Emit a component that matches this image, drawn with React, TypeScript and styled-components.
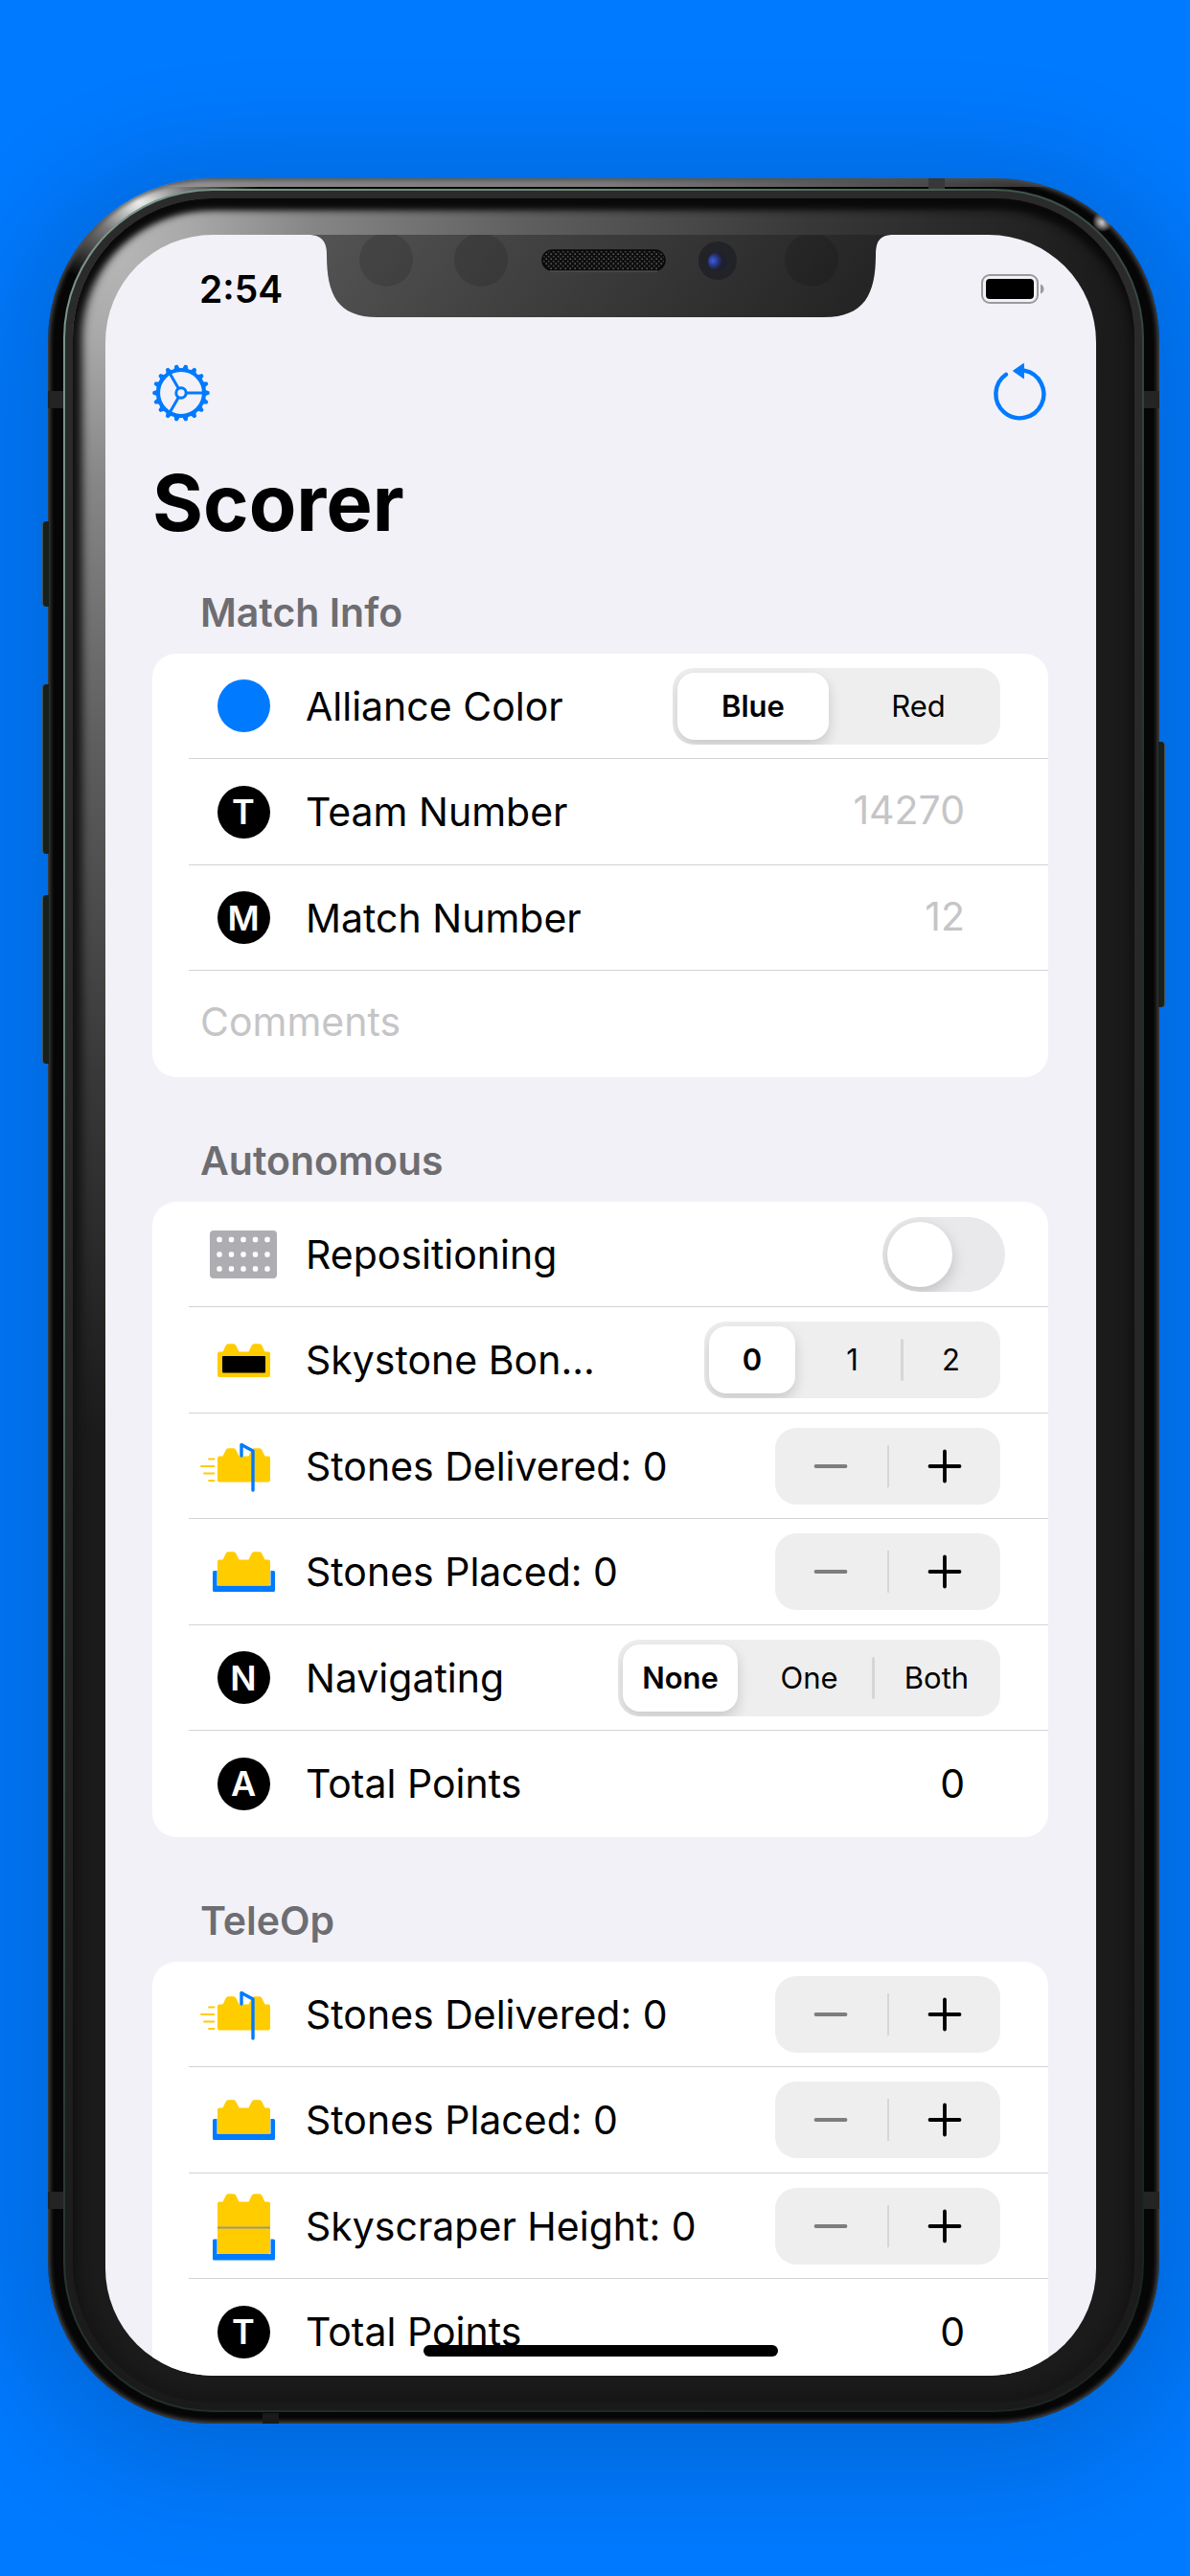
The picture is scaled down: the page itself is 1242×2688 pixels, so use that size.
import React, { useState } from 'react';
import styled, { createGlobalStyle, css } from 'styled-components';

const BLUE = '#007aff';
const YELLOW = '#ffcc00';

const GlobalStyle = createGlobalStyle`
  *, *::before, *::after { box-sizing: border-box; }
  body { margin: 0; background: ${BLUE}; }
  body, button, input { font-family: Inter, "Liberation Sans", sans-serif; }
`;

/* ---------- Device ---------- */

const Stage = styled.div`
  display: flex;
  height: 100vh;
  min-height: 1300px;
  padding: 186px 32px 159px 50px;
  overflow: hidden;
  background: ${BLUE};
`;

const Phone = styled.div`
  position: relative;
  display: flex;
  flex: 1;
  min-width: 0;
  padding: 11px 16px 12px;
  border-radius: 170px;
  background:
    radial-gradient(circle at calc(100% - 59px) 45px, #fff 0, rgba(255, 255, 255, 0) 11px),
    radial-gradient(ellipse 130px 90px at 94px 24px, #f4f4f4 0, rgba(150, 150, 150, 0.8) 40%, rgba(90, 90, 90, 0) 100%),
    linear-gradient(to right, #909090 0, #7c7c7c 50%, #484848 80%, #1c1c1c 100%) top / 100% 9px no-repeat,
    #060606;
  box-shadow:
    inset 0 0 5px 2px #505050,
    0 16px 110px 36px rgba(0, 0, 0, 0.15);
`;

const SideButton = styled.div<{ $side: 'left' | 'right'; $top: number; $height: number }>`
  position: absolute;
  top: ${(p) => p.$top}px;
  ${(p) => p.$side}: -6px;
  width: 7px;
  height: ${(p) => p.$height}px;
  border-radius: ${(p) => (p.$side === 'left' ? '4px 0 0 4px' : '0 4px 4px 0')};
  border-${(p) => p.$side}: 1px solid #4b524e;
  background: #16211c;
`;

const Antenna = styled.div<{ $edge: 'left' | 'right' | 'top' | 'bottom' }>`
  position: absolute;
  ${(p) =>
    p.$edge === 'left' || p.$edge === 'right'
      ? css`
          ${p.$edge}: 0;
          width: 16px;
          height: 18px;
          background: #242424;
        `
      : css`
          ${p.$edge}: 0;
          width: 17px;
          height: 11px;
          background: ${p.$edge === 'top' ? '#383838' : '#1a1a1a'};
        `}
`;

const UpperAntenna = styled(Antenna)`top: 222px;`;
const LowerAntenna = styled(Antenna)`bottom: 224px;`;
const TopAntenna = styled(Antenna)`right: 224px;`;
const BottomAntenna = styled(Antenna)`left: 224px;`;

const Trim = styled.div`
  position: relative;
  display: flex;
  flex: 1;
  min-width: 0;
  padding: 2px;
  border-radius: 156px;
  background: linear-gradient(125deg, #7d9a8c 0, #6a8578 20%, #3c5147 38%, #222e2a 60%, #1a2421 100%);
`;

const GlassEdge = styled.div`
  display: flex;
  flex: 1;
  min-width: 0;
  padding: 8px;
  border-radius: 154px;
  background: linear-gradient(to bottom, #2b2b2b 0, #262626 60%, #1a1a1a 100%);
`;

const Bezel = styled.div`
  display: flex;
  flex: 1;
  min-width: 0;
  padding: 38px 40px 28px 34px;
  border-radius: 146px;
  background: radial-gradient(
    ellipse 1040px 1240px at 40px 50px,
    #b8b8b8 0,
    #a8a8a8 8%,
    #868686 20%,
    #5e5e5e 42%,
    #383838 70%,
    #1b1b1b 100%
  );
  box-shadow:
    inset 0 12px 7px -1px #0a0a0a,
    inset 0 0 9px 10px #171717;
`;

const Screen = styled.main`
  position: relative;
  display: flex;
  flex: 1;
  flex-direction: column;
  min-width: 0;
  overflow: hidden;
  border-radius: 112px;
  background: #f2f1f7;
`;

const NotchDrawing = styled.svg`
  position: absolute;
  top: -1px;
  left: 50%;
  width: 606px;
  height: 88px;
  margin-left: -303px;
`;

const HomeIndicator = styled.div`
  position: absolute;
  bottom: 20px;
  left: 50%;
  width: 370px;
  height: 12px;
  margin-left: -185px;
  border-radius: 6px;
  background: #000;
`;

/* ---------- Header ---------- */

const StatusBar = styled.div`
  display: flex;
  flex: none;
  align-items: center;
  justify-content: space-between;
  height: 86px;
  padding: 28px 53px 0 98px;
`;

const Clock = styled.time`
  font-size: 39px;
  font-weight: 600;
  line-height: 48px;
  color: #000;
`;

const Toolbar = styled.header`
  display: flex;
  flex: none;
  align-items: center;
  justify-content: space-between;
  height: 108px;
  padding: 50px 50px 0 49px;
`;

const IconButton = styled.button`
  display: flex;
  padding: 0;
  border: 0;
  background: none;
  color: ${BLUE};

  svg { display: block; overflow: visible; }
`;

const Title = styled.h1`
  flex: none;
  margin: 36px 49px 39px;
  font-size: 81px;
  font-weight: 700;
  line-height: 100px;
  color: #000;
`;

/* ---------- Form ---------- */

const Form = styled.form`
  display: flex;
  flex: 1;
  flex-direction: column;
  gap: 62px;
  min-height: 0;
  padding: 0 50px 0 49px;
  overflow-y: auto;
  scrollbar-width: none;
`;

const Section = styled.section`
  display: flex;
  flex: none;
  flex-direction: column;
  gap: 17px;
`;

const SectionTitle = styled.h2`
  margin: 0 0 0 50px;
  font-size: 41px;
  font-weight: 600;
  line-height: 51px;
  color: #6d6d72;
`;

const Card = styled.div`
  border-radius: 25px;
  background: #fff;
`;

const Row = styled.div<{ $inset?: number }>`
  display: flex;
  align-items: center;
  gap: 8px;
  height: 110px;
  margin-left: 38px;
  padding-right: ${(p) => p.$inset ?? 50}px;
  border-bottom: 1px solid #d3d3d6;

  &:nth-child(even) { height: 111px; }
  &:last-child { border-bottom-color: transparent; }
`;

const IconCell = styled.span`
  display: flex;
  flex: none;
  justify-content: center;
  width: 114px;
`;

const labelText = css`
  flex: 1;
  min-width: 0;
  overflow: hidden;
  font-size: 41px;
  line-height: 52px;
  white-space: nowrap;
  text-overflow: ellipsis;
  color: #000;
`;

const Label = styled.span`${labelText}`;
const FieldLabel = styled.label`${labelText}`;

const Value = styled.output`
  padding-right: 37px;
  font-size: 41px;
  line-height: 52px;
  color: #000;
`;

const TextField = styled.input<{ $align?: 'left' | 'right' }>`
  flex: 1;
  min-width: 0;
  height: 52px;
  padding: ${(p) => (p.$align === 'right' ? '0 37px 4px 0' : '0 0 4px 12px')};
  border: 0;
  outline: 0;
  background: none;
  font-size: 41px;
  text-align: ${(p) => p.$align ?? 'left'};
  color: #000;

  &::placeholder { color: #c5c5c7; opacity: 1; }
`;

const NumberRow = styled(Row)`padding-right: 50px;`;

const Dot = styled.span<{ $color: string }>`
  display: flex;
  align-items: center;
  justify-content: center;
  width: 55px;
  height: 55px;
  border-radius: 50%;
  background: ${(p) => p.$color};
  font-size: 36px;
  font-weight: 600;
  line-height: 36px;
  color: #fff;
`;

const Glyph = styled.svg`
  display: block;
  width: 92px;
  height: 76px;
`;

/* ---------- Controls ---------- */

const SegmentGroup = styled.div<{ $segment: number; $count: number }>`
  display: grid;
  flex: none;
  grid-template-columns: repeat(${(p) => p.$count}, ${(p) => p.$segment}px);
  height: 80px;
  border-radius: 22px;
  background: #eeeeee;
  overflow: hidden;
`;

const Segment = styled.label<{ $selected: boolean; $divided: boolean }>`
  position: relative;
  display: flex;
  align-items: center;
  justify-content: center;
  margin: 5px;
  border-radius: 18px;
  font-size: 31px;
  font-weight: 400;
  line-height: 40px;
  color: #000;
  ${(p) =>
    p.$selected &&
    css`
      margin-right: 8px;
      background: #fff;
      box-shadow: 0 6px 14px rgba(0, 0, 0, 0.16);
      font-weight: 600;
    `}

  ${(p) =>
    p.$divided &&
    css`
      &::before {
        content: '';
        position: absolute;
        top: 13px;
        left: -6px;
        width: 3px;
        height: 44px;
        border-radius: 2px;
        background: #d6d6d7;
      }
    `}

  input {
    position: absolute;
    inset: 0;
    margin: 0;
    opacity: 0;
  }
`;

const Switch = styled.input`
  flex: none;
  width: 128px;
  height: 78px;
  margin: 0;
  padding: 5px;
  appearance: none;
  border-radius: 39px;
  background: #e9e9eb;
  overflow: hidden;

  &::before {
    content: '';
    display: block;
    width: 68px;
    height: 68px;
    border-radius: 50%;
    background: #fff;
    box-shadow: 0 6px 16px rgba(0, 0, 0, 0.18);
  }
  &:checked { background: #34c759; }
  &:checked::before { margin-left: 50px; }
`;

const StepperBox = styled.div`
  display: flex;
  flex: none;
  align-items: center;
  width: 235px;
  height: 80px;
  border-radius: 22px;
  background: #eeeeee;
`;

const StepButton = styled.button`
  display: flex;
  flex: 1;
  align-items: center;
  justify-content: center;
  height: 80px;
  padding: 0;
  border: 0;
  background: none;
  color: #000;

  &:disabled { color: #7d7d7d; }
`;

const StepDivider = styled.span`
  width: 2px;
  height: 44px;
  background: #d6d6d7;
`;

/* ---------- Drawings ---------- */

const GearIcon = () => (
  <svg width="60" height="60" viewBox="-30 -30 60 60" fill="none" stroke="currentColor" strokeWidth="3">
    <circle r="24" strokeWidth="4.2" />
    <circle r="5.2" strokeWidth="3" />
    {[0, 120, 240].map((a) => (
      <path key={a} d="M6 0H24" transform={`rotate(${a})`} />
    ))}
    {Array.from({ length: 18 }, (_, i) => (
      <path key={i} d="M25-3.200L29.500-1.500Q30 0 29.500 1.500L25 3.200Z" fill="currentColor" stroke="none" transform={`rotate(${i * 20})`} />
    ))}
  </svg>
);

const ResetIcon = () => (
  <svg width="60" height="60" viewBox="0 0 60 60" fill="none">
    <path d="M16 10.800A25 25 0 1 0 35 6.700" stroke="currentColor" strokeWidth="4.4" strokeLinecap="round" />
    <path d="M23.400 7L34.400-0.600V14.800Z" fill="currentColor" stroke="currentColor" strokeWidth="1" strokeLinejoin="round" />
  </svg>
);

const BatteryIcon = () => (
  <svg width="67" height="32" viewBox="0 0 67 32" role="img" aria-label="Battery full">
    <rect x="1" y="1" width="58" height="29" rx="8" fill="none" stroke="#9a9a9d" strokeWidth="2" />
    <rect x="5" y="5" width="50" height="21" rx="4" fill="#000" />
    <path d="M62 10.500Q65.500 12 65.500 15.500T62 20.500Z" fill="#9a9a9d" />
  </svg>
);

const Notch = () => (
  <NotchDrawing viewBox="0 0 606 88" aria-hidden="true">
    <defs>
      <linearGradient id="notchBody" x1="0" y1="0" x2="1" y2="0.1">
        <stop offset="0" stopColor="#545454" />
        <stop offset="0.5" stopColor="#3c3c3c" />
        <stop offset="1" stopColor="#252525" />
      </linearGradient>
      <pattern id="mesh" width="5" height="5" patternUnits="userSpaceOnUse">
        <rect width="5" height="5" fill="#0d0d0d" />
        <circle cx="1.2" cy="1.2" r="0.9" fill="#5a5a5a" />
        <circle cx="3.7" cy="3.7" r="0.9" fill="#4a4a4a" />
      </pattern>
      <radialGradient id="lens" cx="0.25" cy="0.45" r="0.7">
        <stop offset="0" stopColor="#3f5fe0" />
        <stop offset="0.35" stopColor="#2a3a90" />
        <stop offset="0.7" stopColor="#1e2030" />
      </radialGradient>
    </defs>
    <path
      d="M0 0V1C12 2 17 8 17 22C17 63 28 87 70 87H536C578 87 590 63 590 22C590 8 594 2 606 1V0Z"
      fill="url(#notchBody)"
    />
    <circle cx="79" cy="27" r="28" fill="#000" opacity="0.13" />
    <circle cx="178" cy="27" r="28" fill="#000" opacity="0.13" />
    <circle cx="523" cy="27" r="28" fill="#000" opacity="0.13" />
    <rect x="242" y="17" width="128" height="21" rx="10.5" fill="url(#mesh)" stroke="#080808" strokeWidth="1.5" />
    <path d="M250 39H362" stroke="#5c5c5c" strokeWidth="1" />
    <circle cx="425" cy="28" r="20" fill="#222326" />
    <circle cx="425" cy="29" r="10" fill="url(#lens)" />
  </NotchDrawing>
);

/* A two-stud brick; y is the top of its body. */
const Brick = ({ y, height }: { y: number; height: number }) => (
  <path
    d={`M19 ${y + 2}q0-2 2-2h3.500l3.200-6.600q.8-1.600 2.500-1.600h5.600q1.700 0 2.500 1.600l3.200 6.600h10l3.200-6.600q.8-1.600 2.500-1.600h5.600q1.700 0 2.500 1.600l3.200 6.600h3.500q2 0 2 2v${height - 4}q0 2-2 2h-51q-2 0-2-2z`}
    fill={YELLOW}
  />
);

const Tray = ({ y }: { y: number }) => (
  <path d={`M14 ${y + 1.5}q0-1.500 1.500-1.500H18.500v15.500h56V${y}h3q1.500 0 1.500 1.500v19q0 1.500-1.500 1.500h-62q-1.500 0-1.500-1.500z`} fill={BLUE} />
);

const FoundationIcon = () => (
  <Glyph viewBox="0 0 92 76" aria-hidden="true">
    <rect x="11" y="13" width="70" height="50" rx="4" fill="#aeaeb2" />
    {[22.5, 38, 53].map((y) =>
      [21, 33.5, 46, 58.5, 71].map((x) => <rect key={`${x}-${y}`} x={x - 2.7} y={y - 2.7} width="5.4" height="5.4" rx="1.8" fill="#fff" />),
    )}
  </Glyph>
);

const SkystoneIcon = () => (
  <Glyph viewBox="0 0 92 76" aria-hidden="true">
    <Brick y={29.5} height={26.5} />
    <rect x="24" y="34" width="45" height="17.5" rx="1" fill="#000" />
  </Glyph>
);

const DeliveredIcon = () => (
  <Glyph viewBox="0 0 92 76" aria-hidden="true">
    <Brick y={27.5} height={27} />
    <path d="M10 30.500H15.500M2 38H15.500M5 45.500H15.500M10 53H15.500" stroke={YELLOW} strokeWidth="1.8" strokeLinecap="round" />
    <path d="M44 27V15.500L56 22V63" fill="none" stroke={BLUE} strokeWidth="3.4" strokeLinejoin="round" strokeLinecap="round" />
  </Glyph>
);

const PlacedIcon = () => (
  <Glyph viewBox="0 0 92 76" aria-hidden="true">
    <Tray y={37} />
    <Brick y={25.5} height={27} />
  </Glyph>
);

const SkyscraperIcon = () => (
  <Glyph viewBox="0 0 92 76" aria-hidden="true">
    <Tray y={51.5} />
    <Brick y={12.5} height={54.5} />
    <rect x="19" y="38.5" width="55" height="2" fill="#9a958a" />
  </Glyph>
);

const StepGlyph = ({ d }: { d: string }) => (
  <svg width="36" height="36" viewBox="0 0 36 36" stroke="currentColor" strokeWidth="3.8" strokeLinecap="round" aria-hidden="true">
    <path d={d} />
  </svg>
);

/* ---------- Composite controls ---------- */

type SegmentedProps = {
  name: string;
  label: string;
  options: string[];
  width: number;
  value: number;
  onChange: (index: number) => void;
};

const Segmented = ({ name, label, options, width, value, onChange }: SegmentedProps) => (
  <SegmentGroup role="radiogroup" aria-label={label} $segment={width} $count={options.length}>
    {options.map((text, i) => (
      <Segment key={text} $selected={i === value} $divided={i > 0 && i !== value && i - 1 !== value}>
        <input type="radio" name={name} checked={i === value} onChange={() => onChange(i)} />
        {text}
      </Segment>
    ))}
  </SegmentGroup>
);

const CounterRow = ({ icon, label }: { icon: React.ReactNode; label: string }) => {
  const [count, setCount] = useState(0);
  return (
    <Row>
      <IconCell>{icon}</IconCell>
      <Label>{`${label}: ${count}`}</Label>
      <StepperBox>
        <StepButton type="button" aria-label={`Decrease ${label}`} disabled={count === 0} onClick={() => setCount(count - 1)}>
          <StepGlyph d="M2.500 18H33.500" />
        </StepButton>
        <StepDivider />
        <StepButton type="button" aria-label={`Increase ${label}`} onClick={() => setCount(count + 1)}>
          <StepGlyph d="M2.500 18H33.500M18 2.500V33.500" />
        </StepButton>
      </StepperBox>
    </Row>
  );
};

const TotalRow = ({ letter }: { letter: string }) => (
  <Row>
    <IconCell><Dot $color="#000">{letter}</Dot></IconCell>
    <Label>Total Points</Label>
    <Value>0</Value>
  </Row>
);

type NumberFieldRowProps = { id: string; letter: string; label: string; placeholder: string };

const NumberFieldRow = ({ id, letter, label, placeholder }: NumberFieldRowProps) => (
  <NumberRow>
    <IconCell><Dot $color="#000">{letter}</Dot></IconCell>
    <FieldLabel htmlFor={id}>{label}</FieldLabel>
    <TextField id={id} $align="right" inputMode="numeric" placeholder={placeholder} />
  </NumberRow>
);

export default function App() {
  const [alliance, setAlliance] = useState(0);
  const [skystones, setSkystones] = useState(0);
  const [navigating, setNavigating] = useState(0);

  return (
    <>
      <GlobalStyle />
      <Stage>
        <Phone>
          <SideButton $side="left" $top={358} $height={89} />
          <SideButton $side="left" $top={528} $height={177} />
          <SideButton $side="left" $top={748} $height={176} />
          <SideButton $side="right" $top={588} $height={277} />
          <UpperAntenna $edge="left" />
          <UpperAntenna $edge="right" />
          <LowerAntenna $edge="left" />
          <LowerAntenna $edge="right" />
          <TopAntenna $edge="top" />
          <BottomAntenna $edge="bottom" />
          <Trim>
            <GlassEdge>
              <Bezel>
                <Screen>
                  <StatusBar>
                    <Clock>2:54</Clock>
                    <BatteryIcon />
                  </StatusBar>
                  <Toolbar>
                    <IconButton type="button" aria-label="Settings"><GearIcon /></IconButton>
                    <IconButton type="button" aria-label="Reset"><ResetIcon /></IconButton>
                  </Toolbar>
                  <Title>Scorer</Title>
                  <Form onSubmit={(e) => e.preventDefault()}>
                    <Section>
                      <SectionTitle>Match Info</SectionTitle>
                      <Card>
                        <Row>
                          <IconCell><Dot $color={alliance === 0 ? BLUE : '#ff3b30'} /></IconCell>
                          <Label>Alliance Color</Label>
                          <Segmented name="alliance" label="Alliance Color" options={['Blue', 'Red']} width={171} value={alliance} onChange={setAlliance} />
                        </Row>
                        <NumberFieldRow id="team" letter="T" label="Team Number" placeholder="14270" />
                        <NumberFieldRow id="match" letter="M" label="Match Number" placeholder="12" />
                        <Row>
                          <TextField aria-label="Comments" placeholder="Comments" />
                        </Row>
                      </Card>
                    </Section>

                    <Section>
                      <SectionTitle>Autonomous</SectionTitle>
                      <Card>
                        <Row $inset={45}>
                          <IconCell><FoundationIcon /></IconCell>
                          <FieldLabel htmlFor="repositioning">Repositioning</FieldLabel>
                          <Switch id="repositioning" type="checkbox" role="switch" />
                        </Row>
                        <Row>
                          <IconCell><SkystoneIcon /></IconCell>
                          <Label>Skystone Bon...</Label>
                          <Segmented name="skystones" label="Skystone Bonus" options={['0', '1', '2']} width={103} value={skystones} onChange={setSkystones} />
                        </Row>
                        <CounterRow icon={<DeliveredIcon />} label="Stones Delivered" />
                        <CounterRow icon={<PlacedIcon />} label="Stones Placed" />
                        <Row>
                          <IconCell><Dot $color="#000">N</Dot></IconCell>
                          <Label>Navigating</Label>
                          <Segmented name="navigating" label="Navigating" options={['None', 'One', 'Both']} width={133} value={navigating} onChange={setNavigating} />
                        </Row>
                        <TotalRow letter="A" />
                      </Card>
                    </Section>

                    <Section>
                      <SectionTitle>TeleOp</SectionTitle>
                      <Card>
                        <CounterRow icon={<DeliveredIcon />} label="Stones Delivered" />
                        <CounterRow icon={<PlacedIcon />} label="Stones Placed" />
                        <CounterRow icon={<SkyscraperIcon />} label="Skyscraper Height" />
                        <TotalRow letter="T" />
                      </Card>
                    </Section>
                  </Form>
                  <Notch />
                  <HomeIndicator />
                </Screen>
              </Bezel>
            </GlassEdge>
          </Trim>
        </Phone>
      </Stage>
    </>
  );
}
